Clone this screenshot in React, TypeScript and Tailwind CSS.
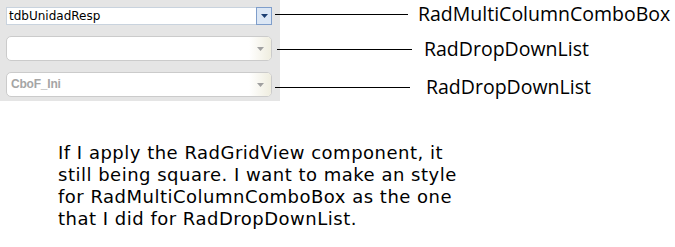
import React from "react";

function Arrow({ color }: { color: string }) {
  return (
    <svg width="7" height="4" viewBox="0 0 7 4">
      <path d="M0 0H7L3.5 4Z" fill={color} />
    </svg>
  );
}

function MultiColumnCombo() {
  return (
    <div className="flex h-[18px] w-[266px] border border-[#c9d3de] bg-white">
      <span className="flex-1 pl-[2px] text-[12px] leading-[16px] text-black [font-family:'DejaVu_Sans',sans-serif]">
        tdbUnidadResp
      </span>
      <div className="flex w-[16px] items-center justify-center border border-[#7f9ecb] bg-[#dce7f5] -my-px -mr-px">
        <Arrow color="#1d3f73" />
      </div>
    </div>
  );
}

function DropDownList({ text }: { text?: string }) {
  return (
    <div className="flex h-[25px] w-[266px] overflow-hidden rounded-[5px] border border-[#cbcbcb] bg-white">
      <span className="flex-1 pl-[4px] text-[12px] font-bold leading-[23px] tracking-[-0.2px] text-[#a5a5a5] [font-family:'Liberation_Sans',sans-serif]">
        {text}
      </span>
      <div className="flex w-[22px] items-center justify-center bg-gradient-to-r from-[#ffffff] to-[#efeddf]">
        <Arrow color="#a0a0a0" />
      </div>
    </div>
  );
}

function Callout({ lineW, gap, label, top }: { lineW: string; gap: string; label: string; top: string }) {
  return (
    <div className={`flex h-[28px] items-center ${top}`}>
      <div className={`h-px bg-black ${lineW}`} />
      <span className={`${gap} text-[19.5px] leading-[28px] text-black [font-family:'Open_Sans',sans-serif]`}>
        {label}
      </span>
    </div>
  );
}

export default function App() {
  return (
    <div className="h-[247px] w-[675px] bg-white">
      <div className="flex">
        <div className="flex h-[101px] w-[280px] flex-col bg-[#e5e5e5] pl-[6px] pt-[7px]">
          <MultiColumnCombo />
          <div className="mt-[11px]">
            <DropDownList />
          </div>
          <div className="mt-[11px]">
            <DropDownList text="CboF_Ini" />
          </div>
        </div>
        <div className="-ml-[5px] flex flex-col">
          <Callout top="mt-0" lineW="w-[133px]" gap="ml-[10px]" label="RadMultiColumnComboBox" />
          <Callout top="mt-[7px] ml-[2px]" lineW="w-[135px]" gap="ml-[12px]" label="RadDropDownList" />
          <Callout top="mt-[10px]" lineW="w-[135px]" gap="ml-[16px]" label="RadDropDownList" />
        </div>
      </div>
      <p className="ml-[58px] mt-[41px] text-[18px] leading-[22px] tracking-[0.5px] text-black [font-family:'DejaVu_Sans',sans-serif]">
        If I apply the RadGridView component, it
        <br />
        still being square. I want to make an style
        <br />
        for RadMultiColumnComboBox as the one
        <br />
        that I did for RadDropDownList.
      </p>
    </div>
  );
}
